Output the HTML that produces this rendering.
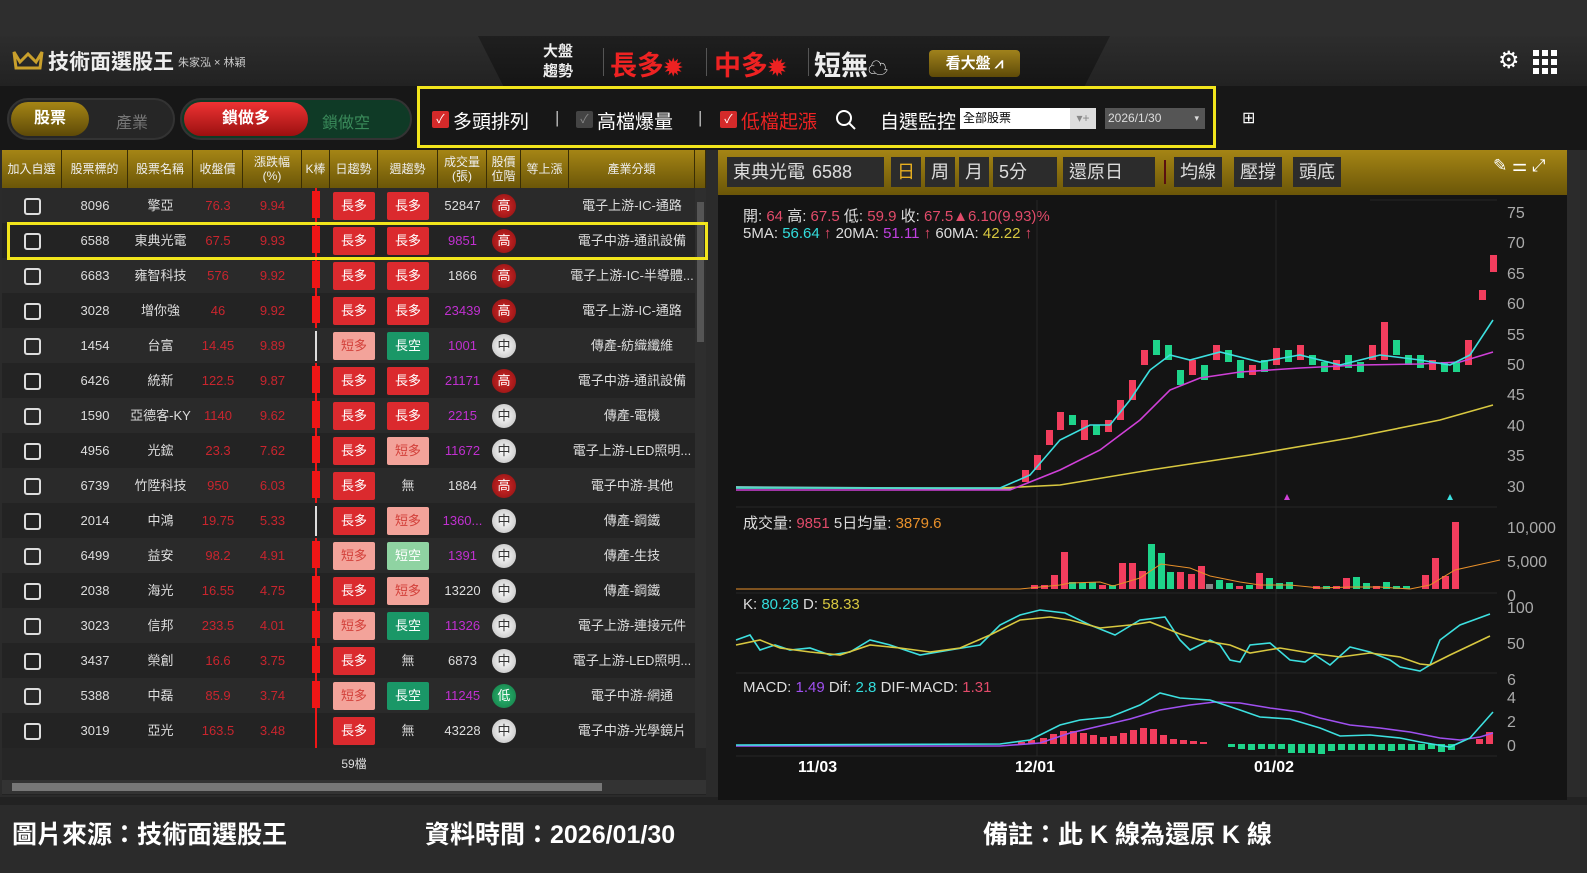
<!DOCTYPE html>
<html><head><meta charset="utf-8">
<style>
*{margin:0;padding:0;box-sizing:border-box}
body{width:1587px;height:873px;overflow:hidden;background:#2b2b2b;font-family:"Liberation Sans","Noto Sans CJK TC",sans-serif;color:#ddd;position:relative}
.abs{position:absolute}
#top{left:0;top:0;width:1587px;height:36px;background:#2e2e2e}
#hdr{left:0;top:36px;width:1587px;height:50px;background:linear-gradient(#2d2d2d,#222)}
#trap{left:478px;top:36px;width:632px;height:50px;background:linear-gradient(#1f1f1f,#151515);clip-path:polygon(0 0,100% 0,96% 100%,4% 100%)}
#bar2{left:0;top:86px;width:1587px;height:64px;background:#171717}
.tbl{left:2px;top:150px;width:704px}
.row{display:flex;height:35px;align-items:center;font-size:13px;color:#ddd}
.row>div{text-align:center;height:35px;line-height:35px;flex:none;position:relative}
.hd{background:linear-gradient(#a58515,#6b5608);color:#eee;font-size:12px;height:38px}
.hd>div{height:38px;border-right:1px solid #3a2e05;display:flex;align-items:center;justify-content:center;line-height:14px}
.r0{background:#2a2a2a}.r1{background:#232323}
.cb{display:inline-block;width:17px;height:17px;border:2px solid #ddd;border-radius:3px;vertical-align:middle}
.red{color:#c9252e}.pur{color:#c030d0}
.tg{display:inline-block;width:42px;height:28px;line-height:28px;margin-top:3px;font-size:13px;border-radius:2px}
.tr{background:#db2a2e;color:#fff}.tp{background:#f3a39a;color:#d3403a}.tgr{background:#1a9767;color:#fff}.tlg{background:#8fd3a2;color:#fff}
.ci{display:inline-block;width:24px;height:24px;border-radius:50%;line-height:24px;font-size:13px;margin-top:5px}
.hi{background:radial-gradient(#d42a2a,#8a1010);color:#fff}.mid{background:radial-gradient(#fff,#bbb);color:#333}.lo{background:radial-gradient(#2bb872,#137a45);color:#fff}
.kr{position:absolute;left:10px;top:3px;width:8px;height:27px;background:#f01616}
.kr:after{content:"";position:absolute;left:3px;top:-3px;width:2px;height:35px;background:#f01616}
.kl{position:absolute;left:13px;top:0;width:2px;height:35px;background:#f01616}
.kw{position:absolute;left:13px;top:3px;width:2px;height:30px;background:#ddd}
.btn{background:#2c2c2c;color:#ddd;height:30px;line-height:30px;padding:0 6px;font-size:18px;position:absolute;top:157px}
.cap{top:815px;font-size:25px;font-weight:bold;color:#fff}
</style></head><body>
<div id="top" class="abs"></div>
<div id="hdr" class="abs"></div>
<div id="trap" class="abs"></div>
<svg class="abs" style="left:12px;top:48px" width="32" height="24"><path d="M2 4 L8 14 L16 6 L24 14 L30 4 L28 20 L4 20 Z" fill="none" stroke="#c9a02c" stroke-width="3"/></svg>
<div class="abs" style="left:48px;top:46px;font-size:21px;font-weight:bold;color:#eee">技術面選股王</div>
<div class="abs" style="left:178px;top:54px;font-size:11px;color:#ccc">朱家泓 × 林穎</div>
<div class="abs" style="left:543px;top:42px;font-size:15px;font-weight:bold;color:#eee;line-height:20px">大盤<br>趨勢</div>
<div class="abs" style="left:603px;top:48px;width:1px;height:28px;background:#555"></div>
<div class="abs" style="left:610px;top:44px;font-size:27px;font-weight:bold;color:#e22">長多<span style="font-size:22px">✹</span></div>
<div class="abs" style="left:706px;top:48px;width:1px;height:28px;background:#555"></div>
<div class="abs" style="left:714px;top:44px;font-size:27px;font-weight:bold;color:#e22">中多<span style="font-size:22px">✹</span></div>
<div class="abs" style="left:808px;top:48px;width:1px;height:28px;background:#555"></div>
<div class="abs" style="left:814px;top:44px;font-size:27px;font-weight:bold;color:#eee">短無<span style="font-size:20px">☁</span></div>
<div class="abs" style="left:929px;top:50px;width:91px;height:27px;background:linear-gradient(#a0821c,#5e4a08);border-radius:4px;color:#fff;font-size:15px;font-weight:bold;line-height:27px;text-align:center">看大盤 ⩘</div>
<div class="abs" style="left:1498px;top:46px;font-size:24px;color:#fff">⚙</div>
<svg class="abs" style="left:1533px;top:50px" width="24" height="24" fill="#fff"><rect x="0" y="0" width="6" height="6"/><rect x="9" y="0" width="6" height="6"/><rect x="18" y="0" width="6" height="6"/><rect x="0" y="9" width="6" height="6"/><rect x="9" y="9" width="6" height="6"/><rect x="18" y="9" width="6" height="6"/><rect x="0" y="18" width="6" height="6"/><rect x="9" y="18" width="6" height="6"/><rect x="18" y="18" width="6" height="6"/></svg>

<div id="bar2" class="abs"></div>
<div class="abs" style="left:7px;top:98px;width:168px;height:42px;border-radius:21px;background:#262626;border:2px solid #333"></div>
<div class="abs" style="left:11px;top:102px;width:78px;height:34px;border-radius:17px;background:linear-gradient(#a58515,#5e4a08);color:#fff;font-size:16px;font-weight:bold;text-align:center;line-height:34px">股票</div>
<div class="abs" style="left:116px;top:109px;font-size:16px;color:#777">產業</div>
<div class="abs" style="left:180px;top:98px;width:232px;height:42px;border-radius:21px;background:#0f3a26;border:2px solid #333"></div>
<div class="abs" style="left:184px;top:102px;width:124px;height:34px;border-radius:17px;background:linear-gradient(#e33,#9b1010);color:#fff;font-size:16px;font-weight:bold;text-align:center;line-height:34px">鎖做多</div>
<div class="abs" style="left:322px;top:109px;font-size:16px;color:#3a8a5a">鎖做空</div>
<div class="abs" style="left:417px;top:86px;width:799px;height:62px;border:3px solid #f2e51c"></div>
<div class="abs" style="left:432px;top:111px;width:17px;height:17px;background:#d42a2a;border-radius:2px;color:#fff;font-size:12px;text-align:center;line-height:17px">✓</div>
<div class="abs" style="left:453px;top:107px;font-size:19px;color:#fff">多頭排列</div>
<div class="abs" style="left:555px;top:108px;font-size:17px;color:#bbb">|</div>
<div class="abs" style="left:576px;top:111px;width:17px;height:17px;background:#444;border-radius:2px;color:#888;font-size:12px;text-align:center;line-height:17px">✓</div>
<div class="abs" style="left:597px;top:107px;font-size:19px;color:#fff">高檔爆量</div>
<div class="abs" style="left:698px;top:108px;font-size:17px;color:#bbb">|</div>
<div class="abs" style="left:720px;top:111px;width:17px;height:17px;background:#d42a2a;border-radius:2px;color:#fff;font-size:12px;text-align:center;line-height:17px">✓</div>
<div class="abs" style="left:741px;top:107px;font-size:19px;color:#e22">低檔起漲</div>
<svg class="abs" style="left:835px;top:109px" width="22" height="22"><circle cx="9" cy="9" r="7" fill="none" stroke="#fff" stroke-width="2"/><path d="M14 14 L20 20" stroke="#fff" stroke-width="2"/></svg>
<div class="abs" style="left:880px;top:107px;font-size:19px;color:#fff">自選監控</div>
<div class="abs" style="left:960px;top:108px;width:136px;height:21px;background:#fff;color:#000;font-size:12px;line-height:21px;padding-left:3px">全部股票<span style="position:absolute;left:110px;color:#888;background:#ddd;width:26px;text-align:center">▾+</span></div>
<div class="abs" style="left:1105px;top:108px;width:100px;height:21px;background:#555;color:#ddd;font-size:12px;line-height:21px;padding-left:3px">2026/1/30<span style="position:absolute;right:6px;font-size:9px">▾</span></div>
<div class="abs" style="left:1242px;top:108px;font-size:16px;color:#fff">⊞</div>

<!-- table -->
<div class="abs tbl" style="background:#232323;height:645px">
<div class="row hd"><div style="width:60px">加入自選</div><div style="width:66px">股票標的</div><div style="width:65px">股票名稱</div><div style="width:50px">收盤價</div><div style="width:59px">漲跌幅<br>(%)</div><div style="width:28px">K棒</div><div style="width:48px">日趨勢</div><div style="width:60px">週趨勢</div><div style="width:49px">成交量<br>(張)</div><div style="width:34px">股價<br>位階</div><div style="width:48px">等上漲</div><div style="width:126px">產業分類</div><div style="width:11px"></div></div>
<div class="row r0"><div style="width:60px"><span class="cb"></span></div><div style="width:66px">8096</div><div style="width:65px">擎亞</div><div style="width:50px" class="red">76.3</div><div style="width:59px" class="red">9.94</div><div style="width:28px"><span class="kr"></span></div><div style="width:48px"><span class="tg tr">長多</span></div><div style="width:60px"><span class="tg tr">長多</span></div><div style="width:49px">52847</div><div style="width:34px"><span class="ci hi">高</span></div><div style="width:48px"></div><div style="width:126px">電子上游-IC-通路</div></div>
<div class="row r1"><div style="width:60px"><span class="cb"></span></div><div style="width:66px">6588</div><div style="width:65px">東典光電</div><div style="width:50px" class="red">67.5</div><div style="width:59px" class="red">9.93</div><div style="width:28px"><span class="kr"></span></div><div style="width:48px"><span class="tg tr">長多</span></div><div style="width:60px"><span class="tg tr">長多</span></div><div style="width:49px" class="pur">9851</div><div style="width:34px"><span class="ci hi">高</span></div><div style="width:48px"></div><div style="width:126px">電子中游-通訊設備</div></div>
<div class="row r0"><div style="width:60px"><span class="cb"></span></div><div style="width:66px">6683</div><div style="width:65px">雍智科技</div><div style="width:50px" class="red">576</div><div style="width:59px" class="red">9.92</div><div style="width:28px"><span class="kr"></span></div><div style="width:48px"><span class="tg tr">長多</span></div><div style="width:60px"><span class="tg tr">長多</span></div><div style="width:49px">1866</div><div style="width:34px"><span class="ci hi">高</span></div><div style="width:48px"></div><div style="width:126px">電子上游-IC-半導體...</div></div>
<div class="row r1"><div style="width:60px"><span class="cb"></span></div><div style="width:66px">3028</div><div style="width:65px">增你強</div><div style="width:50px" class="red">46</div><div style="width:59px" class="red">9.92</div><div style="width:28px"><span class="kr"></span></div><div style="width:48px"><span class="tg tr">長多</span></div><div style="width:60px"><span class="tg tr">長多</span></div><div style="width:49px" class="pur">23439</div><div style="width:34px"><span class="ci hi">高</span></div><div style="width:48px"></div><div style="width:126px">電子上游-IC-通路</div></div>
<div class="row r0"><div style="width:60px"><span class="cb"></span></div><div style="width:66px">1454</div><div style="width:65px">台富</div><div style="width:50px" class="red">14.45</div><div style="width:59px" class="red">9.89</div><div style="width:28px"><span class="kw"></span></div><div style="width:48px"><span class="tg tp">短多</span></div><div style="width:60px"><span class="tg tgr">長空</span></div><div style="width:49px" class="pur">1001</div><div style="width:34px"><span class="ci mid">中</span></div><div style="width:48px"></div><div style="width:126px">傳產-紡織纖維</div></div>
<div class="row r1"><div style="width:60px"><span class="cb"></span></div><div style="width:66px">6426</div><div style="width:65px">統新</div><div style="width:50px" class="red">122.5</div><div style="width:59px" class="red">9.87</div><div style="width:28px"><span class="kr"></span></div><div style="width:48px"><span class="tg tr">長多</span></div><div style="width:60px"><span class="tg tr">長多</span></div><div style="width:49px" class="pur">21171</div><div style="width:34px"><span class="ci hi">高</span></div><div style="width:48px"></div><div style="width:126px">電子中游-通訊設備</div></div>
<div class="row r0"><div style="width:60px"><span class="cb"></span></div><div style="width:66px">1590</div><div style="width:65px">亞德客-KY</div><div style="width:50px" class="red">1140</div><div style="width:59px" class="red">9.62</div><div style="width:28px"><span class="kr"></span></div><div style="width:48px"><span class="tg tr">長多</span></div><div style="width:60px"><span class="tg tr">長多</span></div><div style="width:49px" class="pur">2215</div><div style="width:34px"><span class="ci mid">中</span></div><div style="width:48px"></div><div style="width:126px">傳產-電機</div></div>
<div class="row r1"><div style="width:60px"><span class="cb"></span></div><div style="width:66px">4956</div><div style="width:65px">光鋐</div><div style="width:50px" class="red">23.3</div><div style="width:59px" class="red">7.62</div><div style="width:28px"><span class="kr"></span></div><div style="width:48px"><span class="tg tr">長多</span></div><div style="width:60px"><span class="tg tp">短多</span></div><div style="width:49px" class="pur">11672</div><div style="width:34px"><span class="ci mid">中</span></div><div style="width:48px"></div><div style="width:126px">電子上游-LED照明...</div></div>
<div class="row r0"><div style="width:60px"><span class="cb"></span></div><div style="width:66px">6739</div><div style="width:65px">竹陞科技</div><div style="width:50px" class="red">950</div><div style="width:59px" class="red">6.03</div><div style="width:28px"><span class="kr"></span></div><div style="width:48px"><span class="tg tr">長多</span></div><div style="width:60px">無</div><div style="width:49px">1884</div><div style="width:34px"><span class="ci hi">高</span></div><div style="width:48px"></div><div style="width:126px">電子中游-其他</div></div>
<div class="row r1"><div style="width:60px"><span class="cb"></span></div><div style="width:66px">2014</div><div style="width:65px">中鴻</div><div style="width:50px" class="red">19.75</div><div style="width:59px" class="red">5.33</div><div style="width:28px"><span class="kw"></span></div><div style="width:48px"><span class="tg tr">長多</span></div><div style="width:60px"><span class="tg tp">短多</span></div><div style="width:49px" class="pur">1360...</div><div style="width:34px"><span class="ci mid">中</span></div><div style="width:48px"></div><div style="width:126px">傳產-鋼鐵</div></div>
<div class="row r0"><div style="width:60px"><span class="cb"></span></div><div style="width:66px">6499</div><div style="width:65px">益安</div><div style="width:50px" class="red">98.2</div><div style="width:59px" class="red">4.91</div><div style="width:28px"><span class="kr"></span></div><div style="width:48px"><span class="tg tp">短多</span></div><div style="width:60px"><span class="tg tlg">短空</span></div><div style="width:49px" class="pur">1391</div><div style="width:34px"><span class="ci mid">中</span></div><div style="width:48px"></div><div style="width:126px">傳產-生技</div></div>
<div class="row r1"><div style="width:60px"><span class="cb"></span></div><div style="width:66px">2038</div><div style="width:65px">海光</div><div style="width:50px" class="red">16.55</div><div style="width:59px" class="red">4.75</div><div style="width:28px"><span class="kr"></span></div><div style="width:48px"><span class="tg tr">長多</span></div><div style="width:60px"><span class="tg tp">短多</span></div><div style="width:49px">13220</div><div style="width:34px"><span class="ci mid">中</span></div><div style="width:48px"></div><div style="width:126px">傳產-鋼鐵</div></div>
<div class="row r0"><div style="width:60px"><span class="cb"></span></div><div style="width:66px">3023</div><div style="width:65px">信邦</div><div style="width:50px" class="red">233.5</div><div style="width:59px" class="red">4.01</div><div style="width:28px"><span class="kr"></span></div><div style="width:48px"><span class="tg tp">短多</span></div><div style="width:60px"><span class="tg tgr">長空</span></div><div style="width:49px" class="pur">11326</div><div style="width:34px"><span class="ci mid">中</span></div><div style="width:48px"></div><div style="width:126px">電子上游-連接元件</div></div>
<div class="row r1"><div style="width:60px"><span class="cb"></span></div><div style="width:66px">3437</div><div style="width:65px">榮創</div><div style="width:50px" class="red">16.6</div><div style="width:59px" class="red">3.75</div><div style="width:28px"><span class="kr"></span></div><div style="width:48px"><span class="tg tr">長多</span></div><div style="width:60px">無</div><div style="width:49px">6873</div><div style="width:34px"><span class="ci mid">中</span></div><div style="width:48px"></div><div style="width:126px">電子上游-LED照明...</div></div>
<div class="row r0"><div style="width:60px"><span class="cb"></span></div><div style="width:66px">5388</div><div style="width:65px">中磊</div><div style="width:50px" class="red">85.9</div><div style="width:59px" class="red">3.74</div><div style="width:28px"><span class="kr"></span></div><div style="width:48px"><span class="tg tp">短多</span></div><div style="width:60px"><span class="tg tgr">長空</span></div><div style="width:49px" class="pur">11245</div><div style="width:34px"><span class="ci lo">低</span></div><div style="width:48px"></div><div style="width:126px">電子中游-網通</div></div>
<div class="row r1"><div style="width:60px"><span class="cb"></span></div><div style="width:66px">3019</div><div style="width:65px">亞光</div><div style="width:50px" class="red">163.5</div><div style="width:59px" class="red">3.48</div><div style="width:28px"><span class="kl"></span></div><div style="width:48px"><span class="tg tr">長多</span></div><div style="width:60px">無</div><div style="width:49px">43228</div><div style="width:34px"><span class="ci mid">中</span></div><div style="width:48px"></div><div style="width:126px">電子中游-光學鏡片</div></div>
<div style="height:32px;line-height:32px;text-align:center;font-size:12px;background:#262626">59檔</div>
<div style="height:14px;background:#333;position:relative"><div style="position:absolute;left:10px;top:3px;width:590px;height:8px;background:#777"></div></div>
</div>
<div class="abs" style="left:695px;top:188px;width:11px;height:560px;background:#2e2e2e"><div style="margin:14px 2px;width:7px;height:140px;background:#555"></div></div>
<div class="abs" style="left:7px;top:222px;width:701px;height:38px;border:3px solid #f2e51c"></div>
<div class="abs" style="left:0;top:797px;width:1587px;height:8px;background:#222"></div>

<!-- chart -->
<div class="abs" style="left:718px;top:150px;width:849px;height:650px;background:#141414"></div>
<div class="abs" style="left:718px;top:150px;width:849px;height:45px;background:linear-gradient(#a58515,#6b5608)"></div>
<div class="btn" style="left:727px">東典光電</div>
<div class="btn" style="left:806px;width:78px">6588</div>
<div class="btn" style="left:891px;color:#e8b020">日</div>
<div class="btn" style="left:925px">周</div>
<div class="btn" style="left:959px">月</div>
<div class="btn" style="left:993px;width:64px">5分</div>
<div class="btn" style="left:1063px;width:92px">還原日</div>
<div class="abs" style="left:1164px;top:160px;width:2px;height:24px;background:#5a1010"></div>
<div class="btn" style="left:1174px">均線</div>
<div class="btn" style="left:1234px">壓撐</div>
<div class="btn" style="left:1293px">頭底</div>
<div class="abs" style="left:1493px;top:156px;font-size:17px;color:#fff">✎ ⚌ ⤢</div>
<div class="abs" style="left:743px;top:208px;font-size:15px;color:#ddd;line-height:17px">開: <span style="color:#e24b6a">64</span> 高: <span style="color:#e24b6a">67.5</span> 低: <span style="color:#e24b6a">59.9</span> 收: <span style="color:#e24b6a">67.5▲6.10(9.93)%</span><br>5MA: <span style="color:#3dd">56.64</span> <span style="color:#e24b6a">↑</span> 20MA: <span style="color:#c040e0">51.11</span> <span style="color:#e24b6a">↑</span> 60MA: <span style="color:#d8c840">42.22</span> <span style="color:#e24b6a">↑</span></div>
<div class="abs" style="left:743px;top:512px;font-size:15px;color:#ddd">成交量: <span style="color:#e24b6a">9851</span> 5日均量: <span style="color:#e8902a">3879.6</span></div>
<div class="abs" style="left:743px;top:596px;font-size:15px;color:#ddd">K: <span style="color:#3dd">80.28</span> D: <span style="color:#d8c840">58.33</span></div>
<div class="abs" style="left:743px;top:679px;font-size:15px;color:#ddd">MACD: <span style="color:#a050f0">1.49</span> Dif: <span style="color:#3dd">2.8</span> DIF-MACD: <span style="color:#e24b6a">1.31</span></div>
<div class="abs" style="left:1507px;top:199px;font-size:16px;color:#aaa;line-height:30.4px">75<br>70<br>65<br>60<br>55<br>50<br>45<br>40<br>35<br>30</div>
<div class="abs" style="left:1507px;top:512px;font-size:16px;color:#aaa;line-height:34px">10,000<br>5,000<br>0</div>
<div class="abs" style="left:1507px;top:591px;font-size:16px;color:#aaa;line-height:36px">100<br>50<br>6</div>
<div class="abs" style="left:1507px;top:687px;font-size:16px;color:#aaa;line-height:24px">4<br>2<br>0</div>
<div class="abs" style="left:798px;top:759px;font-size:16px;color:#fff;font-weight:bold">11/03</div>
<div class="abs" style="left:1015px;top:759px;font-size:16px;color:#fff;font-weight:bold">12/01</div>
<div class="abs" style="left:1254px;top:759px;font-size:16px;color:#fff;font-weight:bold">01/02</div>
<svg class="abs" style="left:0;top:0" width="1587" height="873">
<g stroke="#262626" stroke-width="1"><line x1="736" y1="507" x2="1497" y2="507"/><line x1="736" y1="593" x2="1497" y2="593"/><line x1="736" y1="673" x2="1497" y2="673"/><line x1="736" y1="756" x2="1497" y2="756"/><line x1="1037" y1="200" x2="1037" y2="756"/><line x1="1276" y1="200" x2="1276" y2="756"/><line x1="1370" y1="200" x2="1497" y2="200"/></g>
<g stroke="#7bb" stroke-width="2"><line x1="736" y1="487" x2="1012" y2="489"/></g>
<g fill="#f23d5d"><rect x="1022" y="470" width="7" height="12"/><rect x="1034" y="455" width="7" height="15"/><rect x="1046" y="430" width="7" height="15"/><rect x="1057" y="412" width="7" height="18"/><rect x="1081" y="420" width="7" height="20"/><rect x="1105" y="420" width="7" height="12"/><rect x="1117" y="400" width="7" height="20"/><rect x="1129" y="380" width="7" height="20"/><rect x="1141" y="350" width="7" height="15"/><rect x="1189" y="360" width="7" height="15"/><rect x="1213" y="345" width="7" height="15"/><rect x="1249" y="365" width="7" height="10"/><rect x="1273" y="348" width="7" height="17"/><rect x="1297" y="345" width="7" height="15"/><rect x="1333" y="360" width="7" height="10"/><rect x="1369" y="345" width="7" height="15"/><rect x="1381" y="322" width="7" height="38"/><rect x="1429" y="360" width="7" height="10"/><rect x="1465" y="340" width="7" height="25"/><rect x="1479" y="290" width="7" height="10"/><rect x="1490" y="255" width="7" height="17"/></g>
<g fill="#1ed48a"><rect x="1069" y="415" width="7" height="10"/><rect x="1093" y="425" width="7" height="10"/><rect x="1153" y="340" width="7" height="15"/><rect x="1165" y="345" width="7" height="15"/><rect x="1177" y="370" width="7" height="15"/><rect x="1201" y="365" width="7" height="15"/><rect x="1225" y="350" width="7" height="12"/><rect x="1237" y="360" width="7" height="18"/><rect x="1261" y="360" width="7" height="12"/><rect x="1285" y="350" width="7" height="12"/><rect x="1309" y="355" width="7" height="10"/><rect x="1321" y="362" width="7" height="10"/><rect x="1345" y="355" width="7" height="13"/><rect x="1357" y="362" width="7" height="10"/><rect x="1393" y="340" width="7" height="15"/><rect x="1405" y="355" width="7" height="10"/><rect x="1417" y="355" width="7" height="13"/><rect x="1441" y="362" width="7" height="10"/><rect x="1453" y="362" width="7" height="10"/></g>
<g fill="none" stroke-width="1.6">
<polyline stroke="#d8c840" points="736,488 1000,488 1060,485 1150,470 1250,455 1350,438 1440,420 1493,405"/>
<polyline stroke="#d040d8" points="736,490 1010,490 1060,470 1100,450 1140,420 1170,390 1200,378 1240,372 1300,368 1360,365 1420,364 1460,362 1493,352"/>
<polyline stroke="#3de0e0" points="736,488 1000,488 1030,475 1060,440 1090,425 1110,425 1130,400 1150,370 1170,355 1190,360 1220,352 1260,362 1300,355 1340,365 1380,355 1420,360 1450,365 1470,355 1493,320"/>
</g>
<path d="M1284 500 l3 -6 l3 6z" fill="#d040d8"/><path d="M1447 500 l3 -6 l3 6z" fill="#3de0e0"/>
<g fill="#f23d5d"><rect x="1031" y="585" width="7" height="4"/><rect x="1041" y="585" width="7" height="4"/><rect x="1051" y="575" width="7" height="14"/><rect x="1061" y="552" width="7" height="37"/><rect x="1099" y="585" width="7" height="4"/><rect x="1119" y="563" width="7" height="26"/><rect x="1129" y="563" width="7" height="26"/><rect x="1139" y="571" width="7" height="18"/><rect x="1177" y="572" width="7" height="17"/><rect x="1188" y="574" width="7" height="15"/><rect x="1198" y="566" width="7" height="23"/><rect x="1236" y="586" width="7" height="3"/><rect x="1256" y="573" width="7" height="16"/><rect x="1313" y="586" width="7" height="3"/><rect x="1333" y="586" width="7" height="3"/><rect x="1343" y="578" width="7" height="11"/><rect x="1373" y="586" width="7" height="3"/><rect x="1422" y="575" width="7" height="14"/><rect x="1432" y="558" width="7" height="31"/><rect x="1442" y="576" width="7" height="13"/><rect x="1452" y="522" width="7" height="67"/></g>
<g fill="#1ed48a"><rect x="1069" y="582" width="7" height="7"/><rect x="1079" y="583" width="7" height="6"/><rect x="1089" y="582" width="7" height="7"/><rect x="1109" y="585" width="7" height="4"/><rect x="1148" y="544" width="7" height="45"/><rect x="1158" y="553" width="7" height="36"/><rect x="1167" y="572" width="7" height="17"/><rect x="1216" y="580" width="7" height="9"/><rect x="1226" y="583" width="7" height="6"/><rect x="1246" y="585" width="7" height="4"/><rect x="1266" y="578" width="7" height="11"/><rect x="1276" y="583" width="7" height="6"/><rect x="1286" y="582" width="7" height="7"/><rect x="1323" y="586" width="7" height="3"/><rect x="1353" y="577" width="7" height="12"/><rect x="1363" y="583" width="7" height="6"/><rect x="1383" y="582" width="7" height="7"/><rect x="1393" y="586" width="7" height="3"/><rect x="1403" y="586" width="7" height="3"/></g>
<rect x="1206" y="584" width="7" height="5" fill="#888"/>
<polyline fill="none" stroke="#e8902a" stroke-width="1" points="736,589 1020,589 1060,585 1070,583 1100,582 1113,586 1140,578 1161,564 1190,568 1210,576 1240,582 1260,585 1290,585 1320,588 1350,587 1380,587 1410,589 1430,585 1455,570 1500,560"/>
<polyline fill="none" stroke="#3de0e0" stroke-width="1.6" points="736,640 750,635 760,650 775,645 790,650 810,648 830,655 850,652 870,640 890,645 920,655 950,650 980,645 1000,625 1020,615 1040,610 1065,613 1090,625 1115,635 1140,620 1165,617 1180,640 1190,650 1210,640 1220,645 1230,660 1240,662 1250,645 1270,643 1290,660 1305,662 1315,655 1330,665 1350,647 1370,652 1390,660 1400,667 1420,671 1430,665 1440,640 1460,625 1490,614"/>
<polyline fill="none" stroke="#d8c840" stroke-width="1.6" points="736,645 760,640 780,648 810,652 840,655 870,645 900,648 930,652 960,648 990,635 1020,620 1050,617 1070,620 1100,628 1130,625 1150,622 1180,634 1200,640 1230,645 1250,653 1280,648 1310,653 1340,657 1370,653 1400,657 1420,664 1430,665 1450,655 1490,636"/>
<g fill="#f23d5d"><rect x="1040" y="738" width="7" height="6"/><rect x="1050" y="734" width="7" height="10"/><rect x="1060" y="731" width="7" height="13"/><rect x="1070" y="731" width="7" height="13"/><rect x="1080" y="733" width="7" height="11"/><rect x="1090" y="735" width="7" height="9"/><rect x="1100" y="737" width="7" height="7"/><rect x="1110" y="736" width="7" height="8"/><rect x="1120" y="733" width="7" height="11"/><rect x="1130" y="730" width="7" height="14"/><rect x="1140" y="728" width="7" height="16"/><rect x="1150" y="729" width="7" height="15"/><rect x="1160" y="735" width="7" height="9"/><rect x="1170" y="739" width="7" height="5"/><rect x="1180" y="740" width="7" height="4"/><rect x="1190" y="741" width="7" height="3"/><rect x="1200" y="742" width="7" height="2"/><rect x="1018" y="742" width="7" height="2"/><rect x="1028" y="740" width="7" height="4"/><rect x="1476" y="739" width="7" height="5"/><rect x="1486" y="732" width="7" height="12"/></g>
<g fill="#1ed48a"><rect x="1228" y="744" width="7" height="3"/><rect x="1238" y="744" width="7" height="5"/><rect x="1248" y="744" width="7" height="6"/><rect x="1258" y="744" width="7" height="5"/><rect x="1268" y="744" width="7" height="5"/><rect x="1278" y="744" width="7" height="5"/><rect x="1288" y="744" width="7" height="9"/><rect x="1298" y="744" width="7" height="9"/><rect x="1308" y="744" width="7" height="9"/><rect x="1318" y="744" width="7" height="10"/><rect x="1328" y="744" width="7" height="7"/><rect x="1338" y="744" width="7" height="6"/><rect x="1348" y="744" width="7" height="6"/><rect x="1358" y="744" width="7" height="6"/><rect x="1368" y="744" width="7" height="6"/><rect x="1378" y="744" width="7" height="6"/><rect x="1388" y="744" width="7" height="7"/><rect x="1398" y="744" width="7" height="6"/><rect x="1408" y="744" width="7" height="6"/><rect x="1418" y="744" width="7" height="6"/><rect x="1428" y="744" width="7" height="5"/><rect x="1438" y="744" width="7" height="8"/><rect x="1448" y="744" width="7" height="6"/></g>
<polyline fill="none" stroke="#a050f0" stroke-width="1.6" points="736,746 1000,746 1040,743 1070,733 1100,726 1130,719 1160,710 1190,705 1215,702 1240,703 1270,708 1300,712 1320,718 1350,725 1380,728 1410,732 1440,738 1460,740 1480,737 1493,733"/>
<polyline fill="none" stroke="#3de0e0" stroke-width="1.6" points="736,745 1000,744 1030,740 1060,725 1080,720 1110,717 1140,705 1160,693 1180,698 1210,700 1240,710 1260,717 1290,719 1320,728 1340,736 1370,735 1400,738 1420,742 1450,747 1470,738 1493,712"/>
</svg>

<div class="abs cap" style="left:12px">圖片來源：技術面選股王</div>
<div class="abs cap" style="left:425px">資料時間：2026/01/30</div>
<div class="abs cap" style="left:983px">備註：此 K 線為還原 K 線</div>
</body></html>
